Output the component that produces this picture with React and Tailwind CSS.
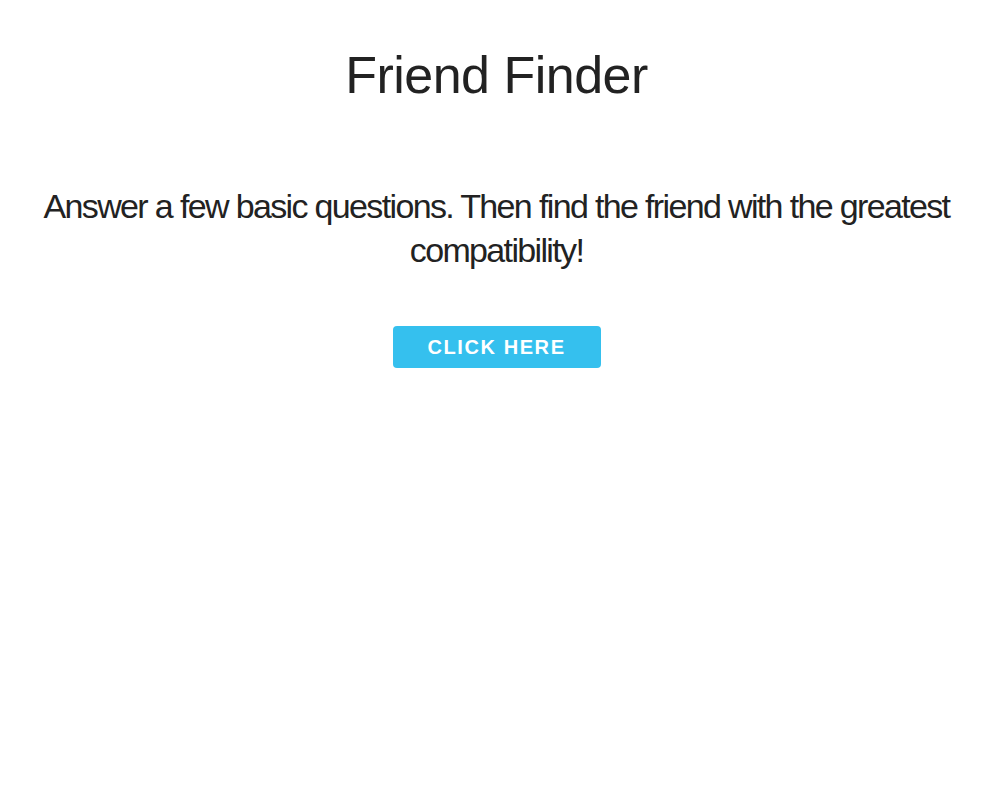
const App = () => {
    return (
        <div className="min-h-screen bg-white text-[#222222]" style={{ fontFamily: '"Liberation Sans", Arial, sans-serif' }}>
            <div className="flex flex-col items-center pl-[36px] pr-[43px] pt-[45px]">
                <h1 className="text-[52px] leading-[60px] tracking-[-0.5px] font-normal">Friend Finder</h1>
                <p className="mt-[79px] text-[34px] leading-[44px] tracking-[-1.65px] text-center">
                    Answer a few basic questions. Then find the friend with the greatest compatibility!
                </p>
                <button className="mt-[54px] w-[208px] h-[42px] rounded bg-[#35c0ee] text-white font-bold text-[20px] tracking-[1.6px] uppercase">
                    Click Here
                </button>
            </div>
        </div>
    );
};

export default App;
